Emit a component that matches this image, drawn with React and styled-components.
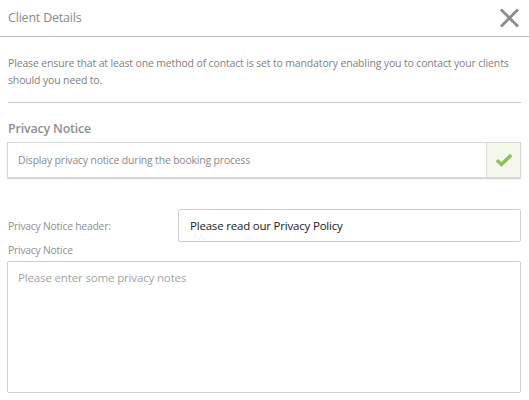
import React from "react";
import styled, { createGlobalStyle } from "styled-components";

const Global = createGlobalStyle`
  html, body { margin: 0; padding: 0; background: #fff; }
  body { font-family: "Open Sans", "Noto Sans", sans-serif; }
  * { box-sizing: border-box; }
`;

const Dialog = styled.div`
  width: 529px;
  height: 400px;
  background: #fff;
  overflow: hidden;
`;

const Header = styled.div`
  height: 37px;
  display: flex;
  align-items: center;
  justify-content: space-between;
  padding: 0 9px 0 8px;
  border-bottom: 1px solid #bdbdbd;
`;

const Title = styled.div`
  font-size: 12.5px;
  color: #8a8a8a;
  letter-spacing: -0.2px;
  padding-bottom: 2px;
`;

const Close = styled.button`
  border: 0;
  background: none;
  padding: 0;
  width: 22px;
  height: 22px;
  display: flex;
  align-items: center;
  justify-content: center;
  cursor: pointer;
  margin-bottom: 1px;
`;

const Body = styled.div`
  padding: 0 8px 0 7px;
  display: flex;
  flex-direction: column;
`;

const Intro = styled.p`
  margin: 18px 0 0 1px;
  font-size: 10.5px;
  line-height: 17px;
  color: #7f7f7f;
  letter-spacing: -0.15px;
`;

const Rule = styled.hr`
  border: 0;
  border-top: 1px solid #c8c8c8;
  margin: 13px 0 0 1px;
  height: 0;
`;

const SectionTitle = styled.h3`
  margin: 17px 0 0 1px;
  font-size: 12.5px;
  font-weight: 600;
  color: #8f8f8f;
  line-height: 18px;
  letter-spacing: -0.2px;
`;

const ToggleBox = styled.div`
  margin-top: 4px;
  height: 36px;
  display: flex;
  border: 1px solid #d9d9d9;
  box-shadow: 0 1px 1px rgba(0, 0, 0, 0.18);
  background: #fff;
`;

const ToggleText = styled.div`
  flex: 1;
  display: flex;
  align-items: center;
  padding-left: 10px;
  font-size: 10.4px;
  color: #8a8a8a;
  letter-spacing: -0.15px;
`;

const Check = styled.div`
  width: 34px;
  border-left: 1px solid #dcdcdc;
  background: #f3f7ec;
  display: flex;
  align-items: center;
  justify-content: center;
`;

const FieldRow = styled.div`
  margin-top: 31px;
  margin-left: 1px;
  display: flex;
  align-items: center;
`;

const Label = styled.label`
  font-size: 10.3px;
  color: #8f8f8f;
  letter-spacing: -0.2px;
  width: 170px;
  display: block;
`;

const TextInput = styled.input`
  flex: 1;
  height: 33px;
  border: 1px solid #cfcfcf;
  border-radius: 2px;
  padding: 0 11px;
  font-family: "Open Sans", "Noto Sans", sans-serif;
  font-size: 11.5px;
  color: #222;
  outline: none;
  letter-spacing: -0.2px;
`;

const StackLabel = styled(Label)`
  width: auto;
  margin: 1px 0 0 1px;
  line-height: 14px;
`;

const Notes = styled.textarea`
  margin-top: 4px;
  height: 132px;
  resize: none;
  border: 1px solid #cfcfcf;
  border-radius: 2px;
  padding: 8px 10px;
  font-family: "Open Sans", "Noto Sans", sans-serif;
  font-size: 11.5px;
  color: #333;
  outline: none;
  letter-spacing: -0.15px;
  &::placeholder { color: #a3a3a3; }
`;

export default function App() {
  return (
    <>
      <Global />
      <Dialog>
        <Header>
          <Title>Client Details</Title>
          <Close aria-label="Close">
            <svg width="21" height="20" viewBox="0 0 21 20">
              <path d="M2 1.5 L19 18.5 M19 1.5 L2 18.5" stroke="#8c8c8c" strokeWidth="2.8" fill="none" />
            </svg>
          </Close>
        </Header>
        <Body>
          <Intro>
            Please ensure that at least one method of contact is set to mandatory enabling you to contact your clients should you need to.
          </Intro>
          <Rule />
          <SectionTitle>Privacy Notice</SectionTitle>
          <ToggleBox>
            <ToggleText>Display privacy notice during the booking process</ToggleText>
            <Check>
              <svg width="18" height="14" viewBox="0 0 18 14">
                <path d="M1.8 7.2 L6.5 11.5 L16.2 2" stroke="#8cc152" strokeWidth="3.4" fill="none" strokeLinejoin="miter" />
              </svg>
            </Check>
          </ToggleBox>
          <FieldRow>
            <Label>Privacy Notice header:</Label>
            <TextInput defaultValue="Please read our Privacy Policy" />
          </FieldRow>
          <StackLabel>Privacy Notice</StackLabel>
          <Notes placeholder="Please enter some privacy notes" />
        </Body>
      </Dialog>
    </>
  );
}
